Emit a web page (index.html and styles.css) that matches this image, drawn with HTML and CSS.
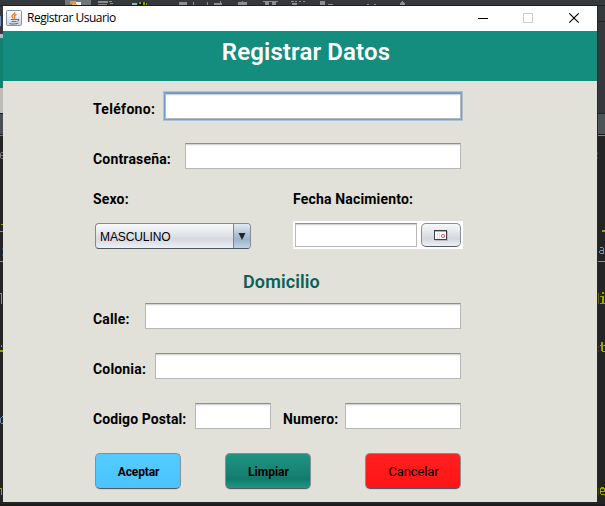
FILE: index.html
```html
<!DOCTYPE html>
<html lang="es">
<head>
<meta charset="utf-8">
<title>Registrar Usuario</title>
<link rel="stylesheet" href="styles.css">
</head>
<body>
<div class="desktop">
  <svg class="backdrop" width="605" height="506" viewBox="0 0 605 506" shape-rendering="crispEdges" aria-hidden="true">
    <rect width="605" height="506" fill="#242424"/>
    <rect width="605" height="113" fill="#35393b"/>
    <rect x="65" width="26" height="6" fill="#70777b"/>
    <path d="M70 1h6v3h-6z" fill="#e8913c"/><path d="M76 2h5v4h-5z" fill="#eee"/><path d="M72 4h5v2h-5z" fill="#d8b176"/>
    <path d="M98 1h10v2h-10zM98 4h9v1h-9zM109 1h3v1h-3zM110 3h3v1h-3zM179 2h8v3h-8zM193 2h1v3h-1zM207 2h1v4h-1zM214 3h8v2h-8zM220 1h1v2h-1zM238 2h9v3h-9zM242 1h1v4h-1zM263 1h15v1h-15zM265 2h4v4h-4zM272 2h4v4h-4zM291 1h3v1h-3zM295 1h2v1h-2zM299 1h2v1h-2zM303 1h2v1h-2zM292 3h5v3h-5zM320 1h5v5h-5zM328 4h5v2h-5zM367 4h2v2h-2zM374 4h2v2h-2zM402 1h1v1h-1zM401 2h3v1h-3zM400 3h5v2h-5zM398 5h9v1h-9z" fill="#8c8f91"/>
    <path d="M132 3h5v2h-5z" fill="#8cb4cf"/><path d="M138 2h8v4h-8z" fill="#111800"/><path d="M139 2h2v2h-2zM143 2h2v3h-2zM146 3h1v2h-1z" fill="#8ea500"/>
    <path d="M0 5h605v1H0z" fill="#211d20"/>
    <path d="M0 16h1v10h-1z" fill="#708dbb"/><path d="M0 34h3v4H0z" fill="#b8b4cc"/><path d="M0 38h3v50H0z" fill="#118270"/><path d="M0 88h3v25H0z" fill="#bcbdb7"/>
    <path d="M0 113h3v1H0z" fill="#1d1d1f"/><path d="M0 114h3v20H0z" fill="#4b4e57"/><path d="M0 135h3v1H0z" fill="#777980"/>
    <path d="M597 21h8v1h-8zM597 113h8v1h-8z" fill="#222526"/><path d="M597 114h8v20h-8z" fill="#4e5355"/><path d="M597 134h8v1h-8z" fill="#191919"/><path d="M597 135h8v1h-8z" fill="#888"/>
    <path d="M597 6h1v496h-1z" fill="#25292b"/>
    <path d="M597 152h1v3h-1zM597 157h1v2h-1z" fill="#464743"/>
    <path d="M1 152h2v1h-2zM0 153h1v5h-1zM1 155h2v1h-2zM1 158h2v1h-2z" fill="#777"/>
    <path d="M2 416h1v1h-1zM0 418h1v5h-1zM1 417h1v1h-1zM1 423h2v1h-2z" fill="#6a8cab"/>
    <path d="M1 224h2v1h-2zM0 231h3v1H0zM0 293h2v11h-1v-10H0zM1 345h1v2h-1zM0 350h3v2H0zM0 488h2v7h-1v-6H0zM602 230h3v2h-3z" fill="#96a000"/>
    <path d="M0 261h3v1H0zM598 261h7v1h-7z" fill="#6897ce"/>
    <path d="M2 248h1v2h-1zM2 254h1v2h-1z" fill="#1f416b"/>
    <path d="M598 293h1v11h-1z" fill="#6b5d18"/>
    <path d="M598 346h1v2h-1zM598 350h1v2h-1zM598 488h1v7h-1z" fill="#4c401c"/>
    <path d="M0 504h605v2H0z" fill="#1c1b1d"/>
    <path d="M600 247h3v1h1v6h-4v-1h-1v-2h1v-1h3v-2h-3zM600 251v2h3v-2z" fill="#6897ce" fill-rule="evenodd"/>
    <path d="M602 292h2v2h-2zM600 296h4v7h1v1h-5v-1h2v-6h-2zM601 342h2v3h2v1h-2v5h2v1h-3v-1h-1v-5h-1v-1h1zM601 487h3v1h1v4h-4v2h4v1h-4v-1h-1v-6h1zM601 489v2h3v-2z" fill="#9ca300" fill-rule="evenodd"/>
  </svg>

  <main class="window">
    <div class="titlebar">
      <svg class="java" width="16" height="16" viewBox="0 0 16 16">
        <defs><linearGradient id="tile" x2="0" y2="1"><stop stop-color="#fdfdfd"/><stop offset="1" stop-color="#cbd3df"/></linearGradient></defs>
        <rect x=".5" y=".5" width="15" height="15" rx="1.2" fill="url(#tile)" stroke="#8a96a4"/>
        <path d="M9 2.200C9 4.300 5.600 4.400 6 6.500c.1.800 1 1.200 1.400 2M10.500 4.400C8.800 5 7.700 5.900 8.700 7.100c.4.500.3.900-.3 1.400" fill="none" stroke="#e8761c" stroke-width="1.300"/>
        <path d="M5 9.500h6M5.600 11.500h4.800M3.500 13.500c2 .5 6.500.5 8.700-.2M11.200 9.500c2.300-.5 1.700 1.400.2 1.800" fill="none" stroke="#4c7696" stroke-width="1.100"/>
      </svg>
      <span class="caption">Registrar Usuario</span>
      <svg class="controls" width="119" height="11" viewBox="0 0 119 11">
        <path d="M0 5.500h10" stroke="#000"/>
        <rect x="45.500" y=".5" width="9" height="9" fill="none" stroke="#ccc"/>
        <path d="M91.300 .3l9.400 9.400M100.700 .3l-9.400 9.400" stroke="#000" stroke-width="1.100"/>
      </svg>
    </div>
    <header class="banner"><h1>Registrar Datos</h1></header>
    <form class="form">
      <div class="row"><label class="w-tel">Teléfono:</label><input class="field focused"></div>
      <div class="row"><label class="w-pass">Contraseña:</label><input class="field"></div>
      <div class="pair">
        <section class="sex">
          <label>Sexo:</label>
          <div class="combo"><span>MASCULINO</span><b><svg width="8" height="7" viewBox="0 0 8 7"><path d="M.5 0h7L4 7z" fill="#202428"/></svg></b></div>
        </section>
        <section>
          <label>Fecha Nacimiento:</label>
          <div class="date">
            <input class="field">
            <button type="button" class="btn calendar" aria-label="Calendario">
              <svg width="14" height="11" viewBox="0 0 14 11" shape-rendering="crispEdges">
                <path d="M1 1h13v10H1z" fill="#b9bbc0"/>
                <path d="M.5.500h12v9H.5z" fill="#fff" stroke="#3d4045"/>
                <path d="M1 1h5v1H1z" fill="#efad45"/><path d="M6 1h6v1H6z" fill="#8ab0db"/>
                <path d="M3 3h1v6H3zM5 3h1v6H5z" fill="#dedee2"/>
                <circle cx="9" cy="6" r="1.600" fill="#fff" stroke="#e0564d" shape-rendering="auto"/>
              </svg>
            </button>
          </div>
        </section>
      </div>
      <h2>Domicilio</h2>
      <div class="row"><label class="w-street">Calle:</label><input class="field"></div>
      <div class="row"><label class="w-col">Colonia:</label><input class="field"></div>
      <div class="row"><label class="w-cp">Codigo Postal:</label><input class="field cp"><label class="w-num">Numero:</label><input class="field"></div>
      <div class="actions">
        <button type="button" class="btn accept">Aceptar</button>
        <button type="button" class="btn clear">Limpiar</button>
        <button type="button" class="btn cancel">Cancelar</button>
      </div>
    </form>
  </main>
</div>
</body>
</html>
```
FILE: styles.css
```css
* { box-sizing: border-box; }
body { margin: 0; overflow: hidden; font-family: Roboto, "Liberation Sans", sans-serif; color: #000; }
.desktop { position: relative; width: 605px; height: 506px; padding: 6px 8px 4px 3px; overflow: hidden; }
.backdrop { position: absolute; left: 0; top: 0; }

.window { position: relative; width: 594px; height: 496px; background: #e1e1da; }
.titlebar { display: flex; align-items: center; height: 25px; padding-left: 3px; background: #fff; }
.java { position: relative; top: -1px; }
.caption { margin: -2px 0 0 5px; font: 12px/16px "Open Sans", "Noto Sans", sans-serif; letter-spacing: -.48px; }
.controls { margin-left: auto; }
.banner { height: 50px; background: #148c7e; }
.banner h1 { margin: 0; padding: 7px 0 0 12px; text-align: center; font-size: 24px; line-height: 28px; font-weight: 600; letter-spacing: .13px; color: #fff; }

.form { width: 458px; padding: 12px 0 0 90px; }
.row { display: flex; align-items: flex-start; height: 50px; }
label { display: block; flex: none; font-size: 14px; line-height: 16px; font-weight: 700; letter-spacing: .17px; white-space: nowrap; }
.row label { margin-top: 8px; }
.field {
  flex: 1; min-width: 0; height: 26px; margin: 0; padding: 0 4px; outline: 0; border-radius: 0;
  background: #fff; border: 1px solid #b8b8b8; border-top-color: #8f8f8f;
  box-shadow: inset 0 1px #d5d5d5, inset 0 2px #f3f3f3;
}
.focused { box-shadow: 0 0 0 1px #73a0ce, 0 0 0 2px #a9c3db, inset 0 1px #dad5d5, inset 0 2px #f3f3f3; }
.w-tel { width: 72px; letter-spacing: .3px; }
.w-pass { width: 92px; }
.w-street { width: 52px; }
.w-col { width: 62px; }
.w-cp { width: 102px; letter-spacing: .1px; }
.w-num { width: 62px; }
.cp { flex: none; width: 76px; margin-right: 12px; }

.pair { display: flex; width: 370px; height: 58px; margin-top: -2px; }
.sex { width: 200px; }
.combo {
  display: flex; width: 156px; height: 26px; margin: 16px 0 0 2px; overflow: hidden;
  border: 1px solid #848a95; border-bottom-color: #4c5560; border-radius: 4px;
  background: linear-gradient(#f8f9fb, #dfe2e8 48%, #d5d8e0 62%, #edf0f5);
  font: 12px/26px "Liberation Sans", Arial, sans-serif;
}
.combo span { flex: 1; padding-left: 4px; letter-spacing: -.1px; }
.combo b { display: flex; align-items: center; justify-content: center; width: 17px; border-left: 1px solid #7189a0; background: linear-gradient(#e0eaf2, #a9bfd1 48%, #9db4ca 65%, #c0d4e5); }
.date { display: flex; width: 170px; height: 28px; margin-top: 14px; padding: 2px; background: #fff; }
.date .field { height: 24px; }
.btn { border: 1px solid #858d96; border-bottom-color: #535b65; border-radius: 5px; padding: 0; color: #000; font: 700 12px/16px Roboto, sans-serif; }
.calendar { display: flex; align-items: center; justify-content: center; width: 40px; height: 24px; margin-left: 4px; background: linear-gradient(#f7f8fa, #dde0e6 50%, #d4d7df 66%, #eef0f6); }
h2 { margin: 22px 0 0 150px; height: 32px; font-size: 18px; line-height: 22px; font-weight: 600; letter-spacing: .12px; color: #0b6057; }
.actions { display: flex; margin-left: 2px; }
.actions .btn { width: 86px; height: 36px; padding: 2px 0 0 1px; box-shadow: 0 1px #d2d2cd; }
.accept { background: linear-gradient(#55caff, #49c4ff); }
.actions .accept { letter-spacing: -.15px; }
.actions .clear { margin-left: 44px; background: linear-gradient(#209381, #178173 60%, #117a6c 72%, #1e9785); }
.actions .cancel { width: 96px; margin-left: 54px; background: linear-gradient(#ff2020, #ff1414); font-weight: 400; font-size: 13px; letter-spacing: -.1px; }
```
